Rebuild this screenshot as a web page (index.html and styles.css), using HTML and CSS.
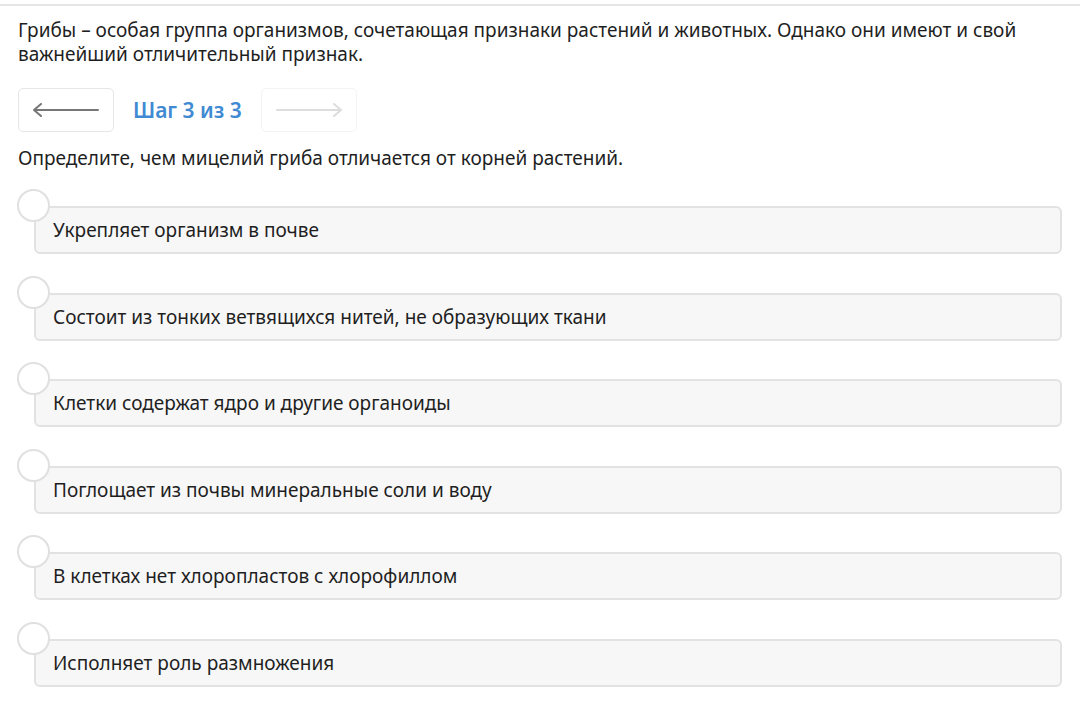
FILE: index.html
```html
<!DOCTYPE html>
<html lang="ru">

<head>
    <meta charset="UTF-8">
    <meta name="viewport" content="width=device-width, initial-scale=1.0">
    <title>Грибы — шаг 3 из 3</title>
    <link rel="stylesheet" href="styles.css">
</head>

<body>
    <div class="top-rule"></div>

    <div class="task">
        <p class="task-intro">Грибы – особая группа организмов, сочетающая признаки растений и животных. Однако они имеют и свой важнейший отличительный признак.</p>

        <div class="stepper">
            <button class="step-btn" type="button">
                <svg width="66" height="14" viewBox="0 0 66 14">
                    <path d="M1 7 H65 M8 1 L1 7 L8 13" fill="none" stroke="#777" stroke-width="2" stroke-linecap="round" stroke-linejoin="round" />
                </svg>
            </button>
            <span class="step-label">Шаг 3 из 3</span>
            <button class="step-btn step-btn-disabled" type="button" disabled>
                <svg width="66" height="14" viewBox="0 0 66 14">
                    <path d="M1 7 H65 M58 1 L65 7 L58 13" fill="none" stroke="#ddd" stroke-width="2" stroke-linecap="round" stroke-linejoin="round" />
                </svg>
            </button>
        </div>

        <p class="question">Определите, чем мицелий гриба отличается от корней растений.</p>

        <ul class="options">
            <li class="option"><span class="radio"></span><div class="option-box">Укрепляет организм в почве</div></li>
            <li class="option"><span class="radio"></span><div class="option-box">Состоит из тонких ветвящихся нитей, не образующих ткани</div></li>
            <li class="option"><span class="radio"></span><div class="option-box">Клетки содержат ядро и другие органоиды</div></li>
            <li class="option"><span class="radio"></span><div class="option-box">Поглощает из почвы минеральные соли и воду</div></li>
            <li class="option"><span class="radio"></span><div class="option-box">В клетках нет хлоропластов с хлорофиллом</div></li>
            <li class="option"><span class="radio"></span><div class="option-box">Исполняет роль размножения</div></li>
        </ul>
    </div>
</body>

</html>
```

FILE: styles.css
```css
body {
    margin: 0;
    background: #fff;
    color: #1f1f1f;
    font-family: "Noto Sans", "Open Sans", sans-serif;
    font-size: 19px;
}

.top-rule {
    margin-top: 4px;
    height: 2px;
    background: #e6e6e6;
}

.task {
    padding: 0 18px;
}

.task-intro {
    margin: 12px 0 0;
    line-height: 24px;
}

/* back / step counter / next */
.stepper {
    display: flex;
    align-items: center;
    gap: 19px;
    margin-top: 22px;
}

.step-btn {
    width: 96px;
    height: 44px;
    display: flex;
    align-items: center;
    justify-content: center;
    background: #fff;
    border: 1px solid #e6e6e6;
    border-radius: 5px;
    padding: 0;
}

.step-btn-disabled {
    border-color: #f3f3f3;
}

.step-label {
    color: #3f8ad3;
    font-size: 21px;
    font-weight: 600;
}

.question {
    margin: 14px 0 0;
    line-height: 24px;
}

/* answer list */
.options {
    list-style: none;
    margin: 20px 0 0;
    padding: 0;
    display: flex;
    flex-direction: column;
    gap: 22.6px;
}

.option {
    display: grid;
    grid-template-columns: 16px 1fr;
    grid-template-rows: 16px 48px;
}

.radio {
    grid-column: 1 / 3;
    grid-row: 1 / 3;
    width: 29px;
    height: 29px;
    border: 2px solid #e0e0e0;
    border-radius: 50%;
    background: #fff;
    z-index: 1;
    align-self: start;
    margin-top: -1px;
    margin-left: -1px;
}

.option-box {
    grid-column: 2;
    grid-row: 2;
    display: flex;
    align-items: center;
    box-sizing: border-box;
    height: 48px;
    padding: 0 17px;
    background: #f7f7f7;
    border: 2px solid #e2e2e2;
    border-radius: 6px;
    font-size: 19px;
}
```
